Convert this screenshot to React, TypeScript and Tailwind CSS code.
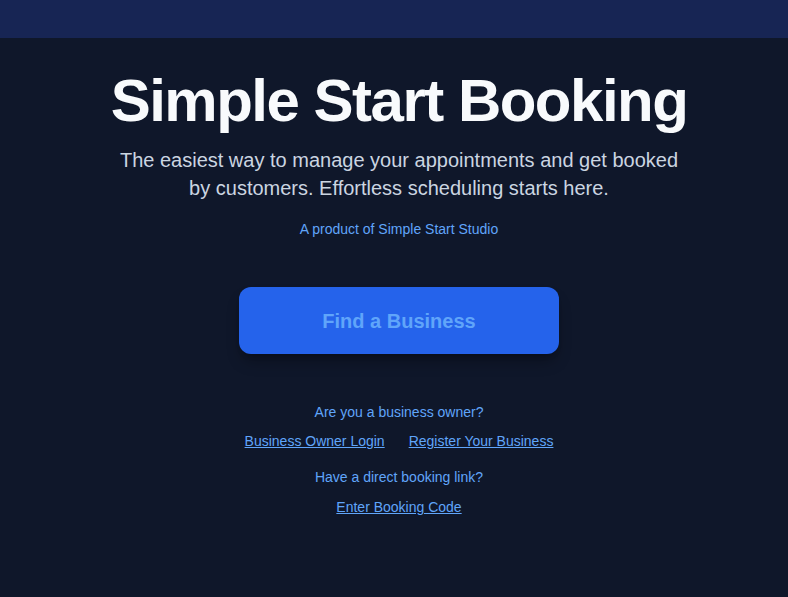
import React from "react";

export default function App() {
  return (
    <div className="min-h-[597px] bg-[#0f172a] font-['Liberation_Sans',Arial,sans-serif]">
      <div className="h-[38px] bg-[#172554]" />
      <div className="flex flex-col items-center pl-[10px] pt-[31px]">
        <h1 className="text-[60px] font-bold tracking-tight leading-[64px] text-[#f8fafc]">Simple Start Booking</h1>
        <p className="mt-[13px] w-[580px] text-center text-[20px] leading-[28px] text-[#cbd5e1]">
          The easiest way to manage your appointments and get booked by customers. Effortless scheduling starts here.
        </p>
        <p className="mt-[17px] text-[14px] leading-[20px] text-[#60a5fa]">A product of Simple Start Studio</p>
        <button className="mt-[48px] h-[67px] w-[320px] rounded-xl bg-[#2563eb] text-[20px] font-bold text-[#60a5fa] shadow-lg shadow-black/30">
          Find a Business
        </button>
        <p className="mt-[48px] text-[14px] leading-[20px] text-[#60a5fa]">Are you a business owner?</p>
        <div className="mt-[9px] flex gap-[24px] text-[14px] leading-[20px] text-[#60a5fa]">
          <a className="underline" href="#">Business Owner Login</a>
          <a className="underline" href="#">Register Your Business</a>
        </div>
        <p className="mt-[16px] text-[14px] leading-[20px] text-[#60a5fa]">Have a direct booking link?</p>
        <a className="mt-[10px] text-[14px] leading-[20px] text-[#60a5fa] underline" href="#">Enter Booking Code</a>
      </div>
    </div>
  );
}
